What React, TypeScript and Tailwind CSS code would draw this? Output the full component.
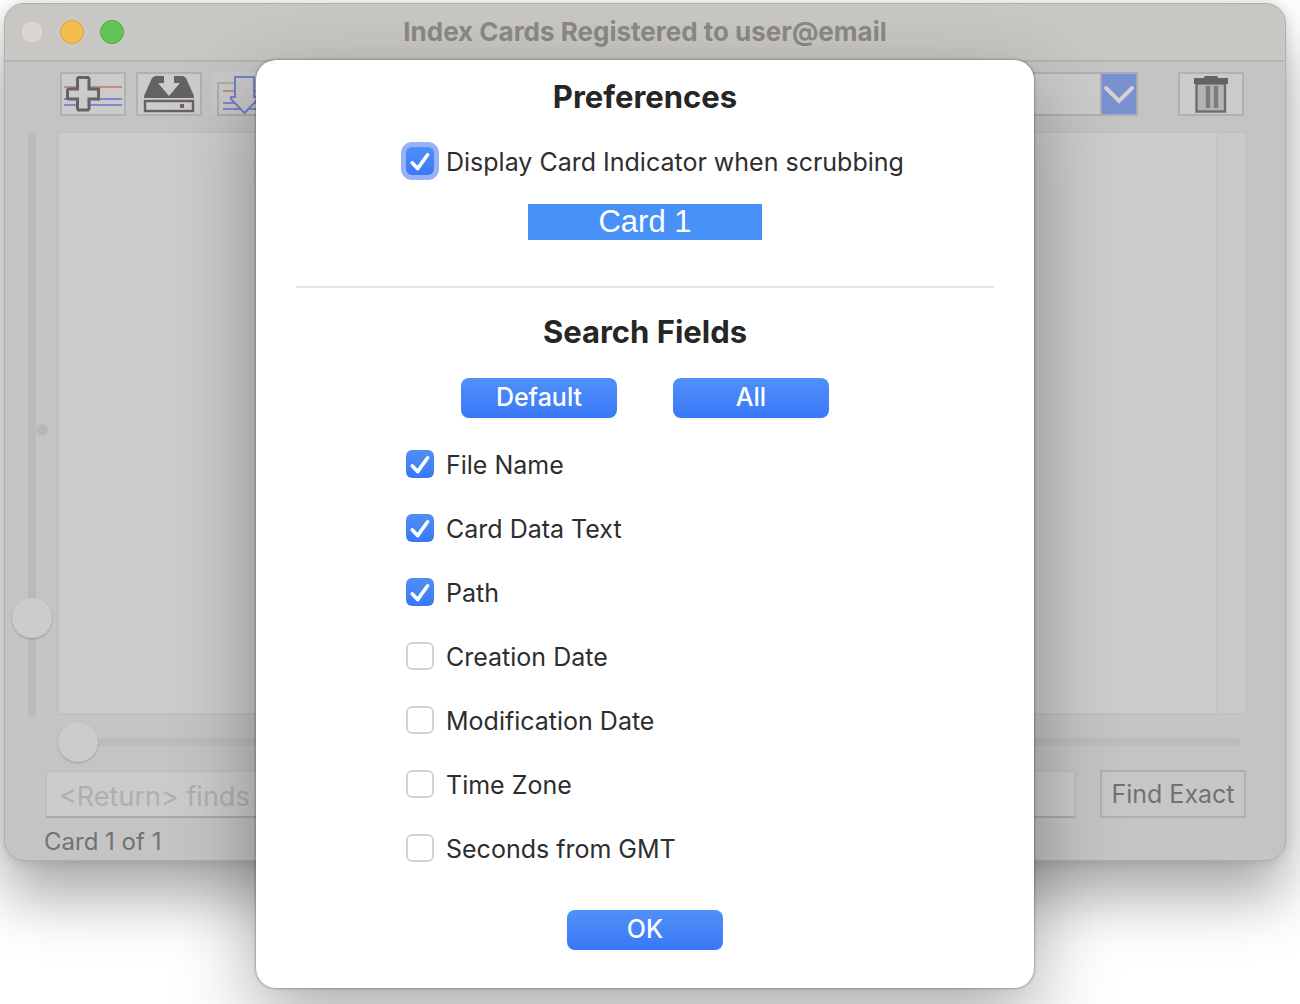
import { useState } from 'react'

const FIELDS = [
  'File Name',
  'Card Data Text',
  'Path',
  'Creation Date',
  'Modification Date',
  'Time Zone',
  'Seconds from GMT',
]

const DEFAULT_FIELDS = ['File Name', 'Card Data Text', 'Path']

type CheckRowProps = {
  label: string
  checked: boolean
  onChange: () => void
  ring?: boolean
}

function CheckRow({ label, checked, onChange, ring }: CheckRowProps) {
  return (
    <label className="flex h-7 items-center gap-3 text-[25px] leading-7 text-[#2e2e2e]">
      <span className="grid size-7 shrink-0">
        <input
          type="checkbox"
          checked={checked}
          onChange={onChange}
          className={`peer col-start-1 row-start-1 size-7 appearance-none rounded-md border-2 border-[#d2d2d2] bg-white
            checked:border-0 checked:bg-linear-to-b checked:from-[#4f8ff8] checked:to-[#3a78f7]
            ${ring ? 'ring-5 ring-[#97b2f6]' : ''}`}
        />
        <svg
          viewBox="0 0 28 28"
          className="pointer-events-none relative col-start-1 row-start-1 hidden size-7 peer-checked:block"
          fill="none"
          stroke="white"
          strokeWidth="3.6"
          strokeLinecap="round"
          strokeLinejoin="round"
        >
          <path d="M6.2 15.8 L11.6 21.6 L21.6 7.8" />
        </svg>
      </span>
      <span className="pt-0.5">{label}</span>
    </label>
  )
}

function BlueButton({ children, onClick }: { children: string; onClick?: () => void }) {
  return (
    <button
      type="button"
      onClick={onClick}
      className="h-10 w-[156px] rounded-lg bg-linear-to-b from-[#5090f9] to-[#3a78f7] pb-0.5 text-[25px] leading-9 font-medium text-white shadow-xs"
    >
      {children}
    </button>
  )
}

function NewCardIcon() {
  return (
    <svg viewBox="0 0 66 44" className="h-11 w-[66px] shrink-0" fill="none">
      <path d="M4 15 H62" stroke="#c98a80" strokeWidth="2" />
      <path d="M4 27 H62 M4 33 H62" stroke="#7f88cc" strokeWidth="2" />
      <path
        d="M18.500 5.500 H28 L29 6.500 V17 H38.500 V27 H29 V36.500 L28 38 H18.500 L17.500 36.500 V27 H8.500 L7.500 26 V18 L8.500 17 H17.500 V6.500 Z"
        fill="#cbcbcb"
        stroke="#636363"
        strokeWidth="3"
      />
    </svg>
  )
}

function SaveIcon() {
  return (
    <svg viewBox="0 0 66 44" className="h-11 w-[66px] shrink-0" fill="none">
      <path d="M19 4 H28 V11 H22 L33 24 L44 11 H38 V4 H47 L50 6 L58 24 V26 H8 V24 L16 6 Z" fill="#636363" />
      <rect x="9" y="29" width="48" height="10" fill="#cbcbcb" stroke="#636363" strokeWidth="2.400" />
      <rect x="44" y="32" width="4" height="4" fill="#8c5a52" />
    </svg>
  )
}

function ImportIcon() {
  return (
    <svg viewBox="0 0 66 44" className="h-11 w-[66px]" fill="none">
      <rect x="6" y="11" width="56" height="32" stroke="#adadad" strokeWidth="2" />
      <path d="M11 19 H56" stroke="#c98a80" strokeWidth="2" />
      <path d="M11 31 H56 M11 37 H56" stroke="#7f88cc" strokeWidth="2" />
      <path d="M23 5 H42 V25 H46 V27 L32.500 41 L19 27 V25 H23 Z" fill="#c9c9c9" stroke="#7480cc" strokeWidth="2" />
    </svg>
  )
}

function TrashIcon() {
  return (
    <svg viewBox="0 0 66 44" className="h-11 w-[66px] shrink-0" fill="none">
      <path d="M26 5 L27 4 H39 L40 5 V6 H50 V12 H16 V6 H26 Z" fill="#636363" />
      <rect x="18.500" y="11.500" width="28.500" height="28" fill="#b4b4b4" stroke="#6c6c6c" strokeWidth="2.400" />
      <path d="M16 11 H50" stroke="#636363" strokeWidth="2" />
      <path d="M30 14 V36 M38 14 V36" stroke="#7c7c7c" strokeWidth="4.500" />
    </svg>
  )
}

const toolButton =
  'flex h-11 w-[66px] shrink-0 items-center justify-center border-2 border-[#b1b1b1] bg-[#cbcbcb]'

export default function App() {
  const [indicator, setIndicator] = useState(true)
  const [fields, setFields] = useState<string[]>(DEFAULT_FIELDS)

  function toggle(name: string) {
    setFields(f => (f.includes(name) ? f.filter(n => n !== name) : [...f, name]))
  }

  return (
    <div className="min-h-screen overflow-hidden bg-white pt-[3px] pr-[14px] pb-4 pl-1 font-['Inter',sans-serif]">
      <div className="relative rounded-[20px] border border-[#b0b0b0] bg-[#c4c4c4] shadow-[0_36px_60px_rgba(0,0,0,0.34),0_0_12px_rgba(0,0,0,0.14)]">
        {/* Title bar */}
        <header className="flex h-[58px] items-center rounded-t-[20px] border-b-2 border-[#b5b5b5] bg-[#c9c7c3] px-[15px]">
          <div className="flex flex-1 gap-4">
            <button type="button" aria-label="Close" className="size-6 rounded-full border border-[#bdb9b6] bg-[#d8d4d1]" />
            <button type="button" aria-label="Minimize" className="size-6 rounded-full border border-[#d9a13c] bg-[#f4be4f]" />
            <button type="button" aria-label="Zoom" className="size-6 rounded-full border border-[#4fae3d] bg-[#62c554]" />
          </div>
          <h1 className="pb-0.5 text-[26px] font-bold text-[#8b8986]">Index Cards Registered to user@email</h1>
          <div className="flex-1" />
        </header>

        {/* Toolbar */}
        <div className="flex gap-[10px] pt-[10px] pr-[41px] pl-[55px]">
          <button type="button" aria-label="New card" className={toolButton}><NewCardIcon /></button>
          <button type="button" aria-label="Save" className={toolButton}><SaveIcon /></button>
          <button type="button" aria-label="Import" className="h-11 w-[66px] shrink-0 bg-[#c9c9c9]"><ImportIcon /></button>
          <div className="relative mr-[30px] flex-1">
            <select aria-label="Card" className="h-11 w-full appearance-none border-2 border-[#b1b1b1] bg-[#cbcbcb]" />
            <span className="pointer-events-none absolute inset-y-0 right-0 flex w-[38px] items-center justify-center border-2 border-[#a9abb5] bg-[#7b90cf]">
              <svg viewBox="0 0 34 40" className="h-10 w-[34px]" fill="none" stroke="#d3d3d3" strokeWidth="4" strokeLinecap="round">
                <path d="M4 14 L17 27 L30 14" />
              </svg>
            </span>
          </div>
          <button type="button" aria-label="Delete card" className={toolButton}><TrashIcon /></button>
        </div>

        {/* Card area */}
        <div className="flex pt-[15px] pr-[38px] pl-[7px]">
          <div className="relative flex w-[45px] shrink-0">
            <input
              type="range"
              aria-label="Zoom level"
              max={200}
              defaultValue={171}
              className="mt-0.5 h-[584px] w-10 appearance-none bg-transparent [writing-mode:vertical-lr]
                [&::-webkit-slider-runnable-track]:w-2 [&::-webkit-slider-runnable-track]:rounded-full [&::-webkit-slider-runnable-track]:bg-[#bababa]
                [&::-webkit-slider-thumb]:-ml-4 [&::-webkit-slider-thumb]:size-10 [&::-webkit-slider-thumb]:appearance-none
                [&::-webkit-slider-thumb]:rounded-full [&::-webkit-slider-thumb]:bg-[#cccccc] [&::-webkit-slider-thumb]:shadow-[0_1px_2px_rgba(0,0,0,0.22)]"
            />
            <span className="absolute top-1/2 left-6 size-3 rounded-full bg-[#b7b7b7]" />
          </div>
          <div className="flex h-[584px] flex-1 justify-end border-2 border-[#c1c1c1] bg-[#cccccc]">
            <div className="w-[29px] border-l-2 border-[#c4c4c4] bg-[#c9c9c9]" />
          </div>
        </div>

        <div className="flex pt-[5px] pr-[45px] pl-[53px]">
          <input
            type="range"
            aria-label="Card position"
            defaultValue={0}
            className="h-10 w-full appearance-none bg-transparent
              [&::-webkit-slider-runnable-track]:h-2 [&::-webkit-slider-runnable-track]:rounded-full [&::-webkit-slider-runnable-track]:bg-[#bcbcbc]
              [&::-webkit-slider-thumb]:-mt-4 [&::-webkit-slider-thumb]:size-10 [&::-webkit-slider-thumb]:appearance-none
              [&::-webkit-slider-thumb]:rounded-full [&::-webkit-slider-thumb]:bg-[#cccccc] [&::-webkit-slider-thumb]:shadow-[0_1px_2px_rgba(0,0,0,0.22)]"
          />
        </div>

        {/* Search */}
        <div className="flex gap-6 pt-2 pr-[39px] pl-10">
          <input
            type="text"
            aria-label="Search"
            placeholder="<Return> finds"
            className="h-12 min-w-0 flex-1 border-2 border-[#bfbfbf] border-b-[#a9a9a9] bg-[#cbcbcb] px-3 pt-1 text-[27px] placeholder:text-[#afafaf]"
          />
          <button type="button" className="h-12 w-[146px] border-2 border-[#b0b0b0] bg-[#c7c7c7] pt-0.5 text-[25px] text-[#727272]">Find Exact</button>
        </div>
        <p className="pt-2 pb-0.5 pl-[39px] text-2xl leading-8 text-[#727272]">Card 1 of 1</p>

        {/* Preferences sheet */}
        <div
          role="dialog"
          aria-labelledby="prefs-title"
          className="absolute top-14 left-1/2 flex w-[778px] max-w-full -translate-x-1/2 flex-col items-center rounded-[20px] bg-white px-10 pt-[17px] pb-[38px]
            shadow-[0_30px_80px_rgba(0,0,0,0.34),0_0_3px_rgba(0,0,0,0.5)]"
        >
          <h2 id="prefs-title" className="text-[31px] leading-10 font-bold text-[#262626]">Preferences</h2>
          <div className="mt-[30px] w-full pl-[110px]">
            <CheckRow
              label="Display Card Indicator when scrubbing"
              checked={indicator}
              onChange={() => setIndicator(!indicator)}
              ring
            />
          </div>
          <div className="mt-[29px] h-9 w-[234px] bg-[#4791f6] text-center font-['Liberation_Sans',sans-serif] text-[31px] leading-9 text-white">
            Card 1
          </div>
          <hr className="mt-[46px] w-full border-t-2 border-[#e5e5e5]" />
          <h2 className="mt-6 text-[31px] leading-10 font-bold text-[#262626]">Search Fields</h2>
          <div className="mt-[26px] flex gap-14">
            <BlueButton onClick={() => setFields(DEFAULT_FIELDS)}>Default</BlueButton>
            <BlueButton onClick={() => setFields(FIELDS)}>All</BlueButton>
          </div>
          <div className="mt-8 mb-12 flex w-full flex-col gap-9 pl-[110px]">
            {FIELDS.map(name => (
              <CheckRow key={name} label={name} checked={fields.includes(name)} onChange={() => toggle(name)} />
            ))}
          </div>
          <BlueButton>OK</BlueButton>
        </div>
      </div>
    </div>
  )
}
